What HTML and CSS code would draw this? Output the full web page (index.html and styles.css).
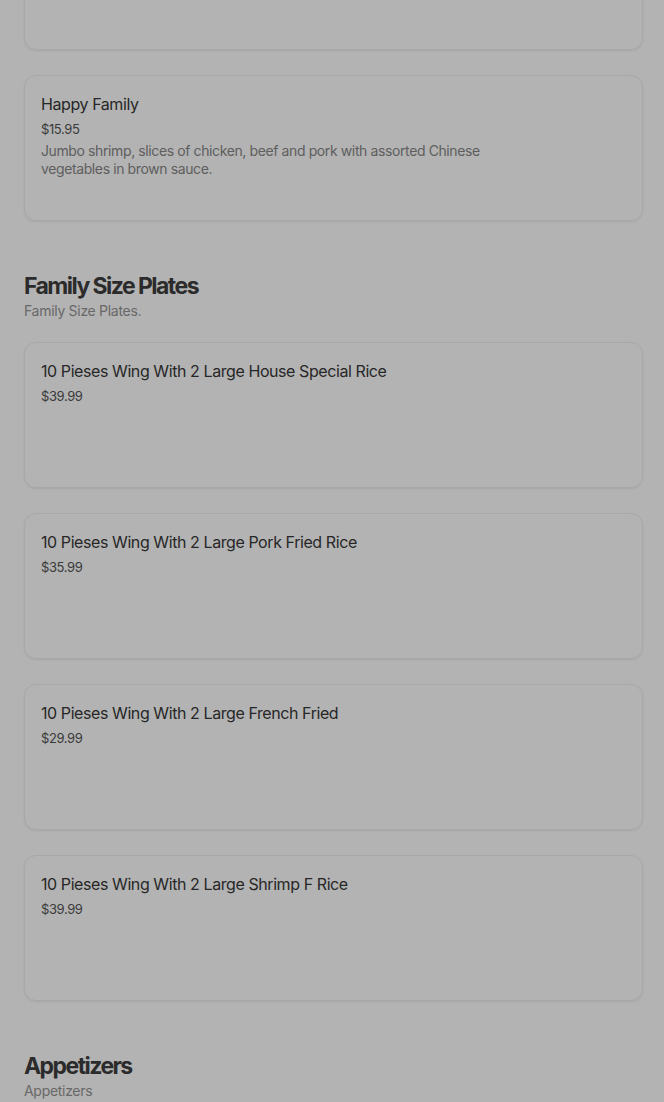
FILE: index.html
```html
<!DOCTYPE html>
<html lang="en">
<head>
<meta charset="utf-8">
<title>Menu</title>
<link rel="stylesheet" href="styles.css">
</head>
<body>
<main class="menu">
  <section class="section section-first">
    <div class="cards">
      <article class="card card-tail"></article>
      <article class="card">
        <div class="card-text">
          <h3 class="item-name">Happy Family</h3>
          <p class="item-price">$15.95</p>
          <p class="item-desc">Jumbo shrimp, slices of chicken, beef and pork with assorted Chinese vegetables in brown sauce.</p>
        </div>
      </article>
    </div>
  </section>

  <section class="section">
    <header class="section-head">
      <h2 class="section-title">Family Size Plates</h2>
      <p class="section-sub">Family Size Plates.</p>
    </header>
    <div class="cards">
      <article class="card">
        <div class="card-text">
          <h3 class="item-name">10 Pieses Wing With 2 Large House Special Rice</h3>
          <p class="item-price">$39.99</p>
        </div>
      </article>
      <article class="card">
        <div class="card-text">
          <h3 class="item-name">10 Pieses Wing With 2 Large Pork Fried Rice</h3>
          <p class="item-price">$35.99</p>
        </div>
      </article>
      <article class="card">
        <div class="card-text">
          <h3 class="item-name">10 Pieses Wing With 2 Large French Fried</h3>
          <p class="item-price">$29.99</p>
        </div>
      </article>
      <article class="card">
        <div class="card-text">
          <h3 class="item-name">10 Pieses Wing With 2 Large Shrimp F Rice</h3>
          <p class="item-price">$39.99</p>
        </div>
      </article>
    </div>
  </section>

  <section class="section">
    <header class="section-head">
      <h2 class="section-title">Appetizers</h2>
      <p class="section-sub">Appetizers</p>
    </header>
  </section>
</main>
</body>
</html>
```

FILE: styles.css
```css
* { box-sizing: border-box; }

html, body {
  margin: 0;
  padding: 0;
  background: #b3b3b3;
}

body {
  font-family: Inter, "Noto Sans", "Liberation Sans", sans-serif;
  color: #2e2e2e;
  overflow: hidden;
}

.menu {
  display: flex;
  flex-direction: column;
  gap: 49px;
  padding: 0 21px 0 24px;
}

.section-first {
  margin-top: -96px;
}

.section {
  display: flex;
  flex-direction: column;
  gap: 22px;
}

.section-head {
  display: flex;
  flex-direction: column;
}

.section-title {
  margin: 0;
  font-size: 23px;
  line-height: 32px;
  font-weight: 700;
  letter-spacing: -1.55px;
  color: #2b2b2b;
}

.section-sub {
  margin: 0;
  font-size: 14px;
  line-height: 18px;
  color: #686868;
  letter-spacing: -0.3px;
}

.cards {
  display: flex;
  flex-direction: column;
  gap: 25px;
}

.card {
  min-height: 146px;
  border: 1px solid #a8a8a8;
  border-radius: 12px;
  padding: 16px;
  box-shadow: 0 1px 2px rgba(0, 0, 0, 0.08);
  display: flex;
}

.card-text {
  display: flex;
  flex-direction: column;
  max-width: 460px;
}

.item-name {
  margin: 0;
  font-size: 16px;
  line-height: 24px;
  font-weight: 400;
  color: #272727;
  letter-spacing: -0.42px;
}

.item-price {
  margin: 3px 0 0;
  font-size: 13px;
  line-height: 20px;
  color: #3a3a3a;
  letter-spacing: -0.4px;
}

.item-desc {
  margin: 3px 0 0;
  font-size: 14px;
  line-height: 18px;
  color: #5e5e5e;
  letter-spacing: -0.39px;
}
```
